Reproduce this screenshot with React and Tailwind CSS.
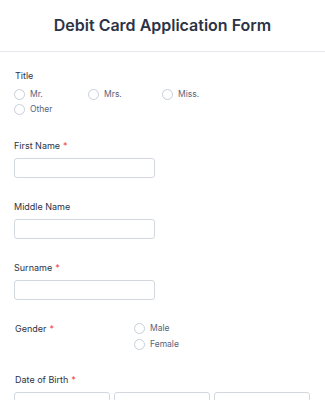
import React from "react";

const font = { fontFamily: "Inter, 'Liberation Sans', sans-serif" };

function Radio({ label }) {
  return (
    <div className="flex items-center gap-[5px] h-[15px]">
      <span className="w-[11px] h-[11px] rounded-full border border-[#c8ced9] bg-white shrink-0" />
      <span className="text-[8.5px] text-[#57647e] leading-none">{label}</span>
    </div>
  );
}

function Label({ children, req }) {
  return (
    <div className="text-[9px] font-normal text-[#2c3345] leading-none">
      {children}
      {req && <span className="text-[#f23a3c] ml-[3px]">*</span>}
    </div>
  );
}

function TextField({ label, req }) {
  return (
    <div className="h-[61px] pt-[10px]">
      <Label req={req}>{label}</Label>
      <div className="mt-[8px] w-[141px] h-[20px] border border-[#d3d8e0] rounded-[3px] bg-white" />
    </div>
  );
}

export default function App() {
  return (
    <div className="w-[325px] h-[400px] bg-white overflow-hidden" style={font}>
      <div className="h-[52px] border-b border-[#e6e8ee] flex items-center justify-center">
        <h1 className="text-[16px] font-semibold text-[#2c3345] leading-none -mt-[2px]">
          Debit Card Application Form
        </h1>
      </div>
      <div className="px-[14px]">
        <div className="pt-[19px] h-[79px]">
          <div className="pl-[1px]"><Label>Title</Label></div>
          <div className="mt-[7px] grid grid-cols-[74px_74px_74px]">
            <Radio label="Mr." />
            <Radio label="Mrs." />
            <Radio label="Miss." />
            <Radio label="Other" />
          </div>
        </div>
        <TextField label="First Name" req />
        <TextField label="Middle Name" />
        <TextField label="Surname" req />
        <div className="h-[50px] pt-[10px] flex">
          <div className="w-[120px] pl-[1px]"><Label req>Gender</Label></div>
          <div className="-mt-[3px] flex flex-col gap-[1px]">
            <Radio label="Male" />
            <Radio label="Female" />
          </div>
        </div>
        <div className="pt-[11px]">
          <div className="pl-[1px]"><Label req>Date of Birth</Label></div>
          <div className="mt-[8px] flex gap-[4px]">
            <div className="w-[96px] h-[20px] border border-[#d3d8e0] rounded-[3px]" />
            <div className="w-[96px] h-[20px] border border-[#d3d8e0] rounded-[3px]" />
            <div className="w-[96px] h-[20px] border border-[#d3d8e0] rounded-[3px]" />
          </div>
        </div>
      </div>
    </div>
  );
}
